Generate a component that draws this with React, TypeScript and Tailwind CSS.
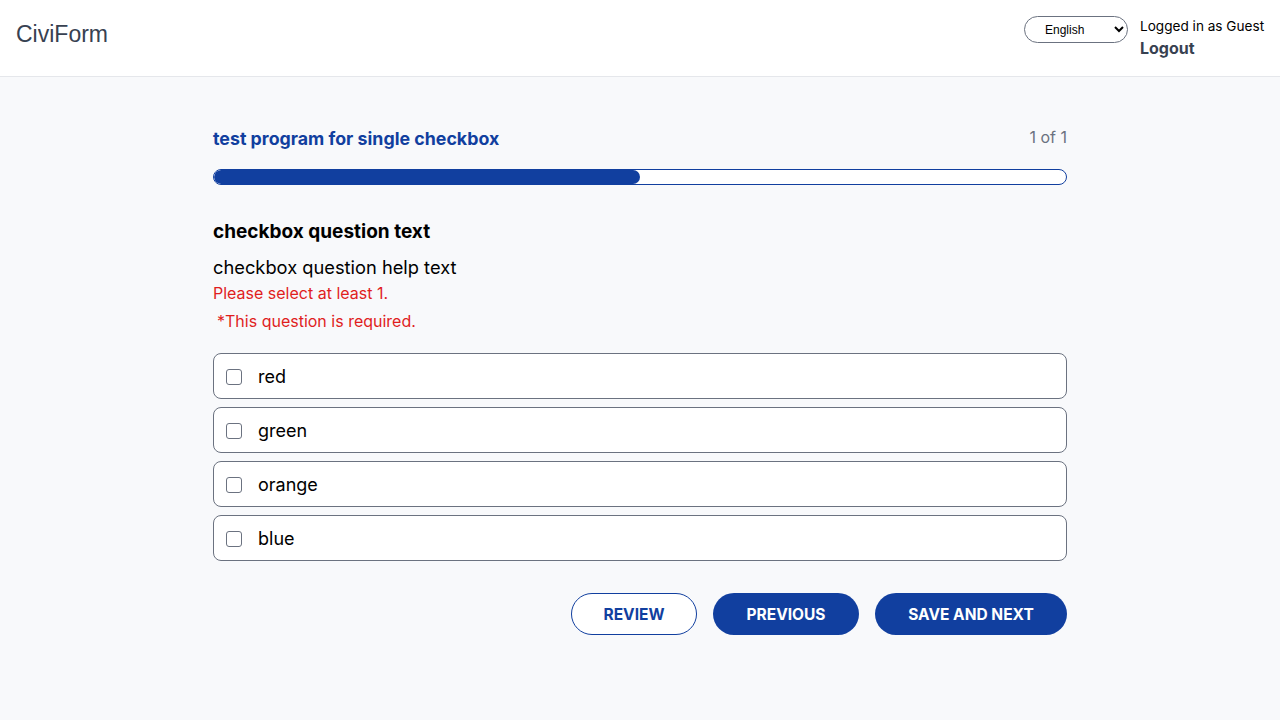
import { useState } from 'react';

const options = ['red', 'green', 'orange', 'blue'];

export default function App() {
  const [checked, setChecked] = useState<Record<string, boolean>>({});

  return (
    <div className="min-h-screen bg-[#f8f9fb] font-['Inter',sans-serif] text-black">
      {/* Header */}
      <header className="h-[77px] bg-white border-b border-[#e5e7eb] flex items-start justify-between px-4">
        <div className="pt-[17px] text-[23px] text-[#374151] font-['Liberation_Sans',Arial,sans-serif]">CiviForm</div>
        <div className="flex items-start gap-3 pt-[16px]">
          <select className="w-[104px] h-[27px] rounded-full border border-[#6b7280] bg-white text-[12px] pl-4 pr-1 font-['Liberation_Sans',Arial,sans-serif]">
            <option>English</option>
          </select>
          <div className="flex flex-col text-[13.6px] leading-[20px] w-[124px]">
            <span className="mt-0 whitespace-nowrap">Logged in as Guest</span>
            <span className="text-[16px] font-bold text-[#374151] mt-[2px]">Logout</span>
          </div>
        </div>
      </header>

      <main className="w-[854px] mx-auto pt-[50px]">
        {/* Program title */}
        <div className="flex items-start justify-between">
          <h1 className="text-[17.8px] font-bold text-[#113f9f] leading-[24px]">test program for single checkbox</h1>
          <span className="text-[16px] text-[#6b7280] leading-[24px] -mt-[2px]">1 of 1</span>
        </div>

        {/* Progress */}
        <div className="mt-[18px] h-4 rounded-full border border-[#113f9f] bg-white overflow-hidden">
          <div className="h-full w-1/2 bg-[#113f9f] rounded-full" />
        </div>

        {/* Question */}
        <div className="mt-[35px] text-[19px] font-bold leading-[24px]">checkbox question text</div>
        <div className="mt-[11px] text-[18.3px] leading-[24px]">checkbox question help text</div>
        <div className="mt-[3px] text-[16px] text-[#e01e1e] leading-[22px]">Please select at least 1.</div>
        <div className="mt-[6px] text-[16px] text-[#e01e1e] leading-[22px] pl-[4px]">*This question is required.</div>

        <div className="mt-[21px] flex flex-col gap-2">
          {options.map(opt => (
            <label
              key={opt}
              className="h-[46px] flex items-center bg-white border border-[#6b7280] rounded-lg px-3 cursor-pointer"
            >
              <input
                type="checkbox"
                checked={!!checked[opt]}
                onChange={e => setChecked(prev => ({ ...prev, [opt]: e.target.checked }))}
                className="w-4 h-4 mt-[1px] appearance-none border border-[#6b7280] rounded-[3px] bg-white checked:bg-[#113f9f]"
              />
              <span className="ml-[16px] text-[18px]">{opt}</span>
            </label>
          ))}
        </div>

        {/* Actions */}
        <div className="mt-[32px] flex justify-end gap-4">
          <button className="w-[126px] h-[42px] rounded-full border border-[#113f9f] bg-white text-[#113f9f] text-[15.5px] font-bold uppercase pt-[1px]">Review</button>
          <button className="w-[146px] h-[42px] rounded-full bg-[#113f9f] text-white text-[15.5px] font-bold uppercase pt-[1px]">Previous</button>
          <button className="w-[192px] h-[42px] rounded-full bg-[#113f9f] text-white text-[15.5px] font-bold uppercase pt-[1px]">Save and next</button>
        </div>
      </main>
    </div>
  );
}
